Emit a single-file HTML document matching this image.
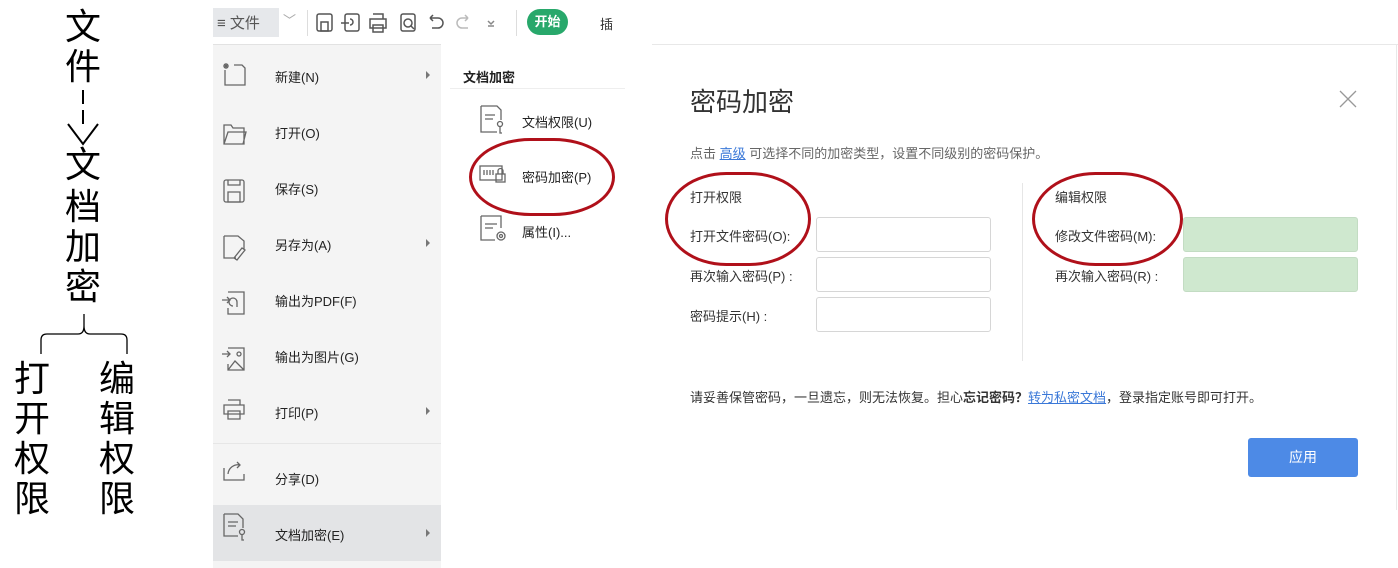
<!DOCTYPE html><html><head><meta charset="utf-8"><style>
body{margin:0;width:1398px;height:567px;background:#fff;position:relative;overflow:hidden;font-family:"Liberation Sans","Noto Sans CJK SC",sans-serif;color:#333}
.a{position:absolute;white-space:nowrap}
.big{font-size:36px;color:#000;line-height:38px;width:40px;text-align:center;font-family:"Liberation Sans","WenQuanYi Zen Hei",sans-serif}
.mi{position:absolute;left:275px;font-size:13px;color:#222}
.arr{position:absolute;left:426px;width:0;height:0;border-left:4px solid #777;border-top:4px solid transparent;border-bottom:4px solid transparent}
.lb{position:absolute;font-size:13px;color:#333}
.in{position:absolute;width:173px;height:33px;border:1px solid #d6d6d6;border-radius:3px;background:#fff}
.g{background:#cfe8cf;border-color:#c3dcc3}
.ell{position:absolute;border:3px solid #b0101a;border-radius:42%/50%}
</style></head><body>
<div class="a big" style="left:63px;top:8px">文</div>
<div class="a big" style="left:63px;top:48px">件</div>
<div class="a" style="left:82px;top:90px;width:2px;height:14px;background:#000"></div>
<div class="a" style="left:82px;top:110px;width:2px;height:14px;background:#000"></div>
<svg class="a" style="left:66px;top:122px" width="34" height="26"><path d="M2 2 L17 22 L32 2" stroke="#000" stroke-width="2" fill="none"/></svg>
<div class="a big" style="left:63px;top:146px">文</div>
<div class="a big" style="left:63px;top:188px">档</div>
<div class="a big" style="left:63px;top:228px">加</div>
<div class="a big" style="left:63px;top:268px">密</div>
<svg class="a" style="left:35px;top:310px" width="95" height="45"><path d="M6 44 V30 Q6 24 12 24 H43 Q49 24 49 16 V4 M49 16 Q49 24 55 24 H86 Q92 24 92 30 V44" stroke="#000" stroke-width="1.3" fill="none"/></svg>
<div class="a big" style="left:12px;top:360px">打</div>
<div class="a big" style="left:12px;top:400px">开</div>
<div class="a big" style="left:12px;top:440px">权</div>
<div class="a big" style="left:12px;top:480px">限</div>
<div class="a big" style="left:97px;top:360px">编</div>
<div class="a big" style="left:97px;top:400px">辑</div>
<div class="a big" style="left:97px;top:440px">权</div>
<div class="a big" style="left:97px;top:480px">限</div>

<div class="a" style="left:213px;top:8px;width:66px;height:29px;background:#e6e8eb"></div>
<div class="a" style="left:217px;top:12px;font-size:15px;color:#555">≡ 文件</div>
<div class="a" style="left:283px;top:10px;font-size:13px;color:#aaa">﹀</div>
<div class="a" style="left:307px;top:10px;width:1px;height:26px;background:#ddd"></div>
<svg class="a" style="left:315px;top:10px" width="200" height="26" fill="none" stroke="#555" stroke-width="1.5">
<rect x="2" y="4" width="15" height="17" rx="2"/><rect x="6" y="12" width="7" height="9"/>
<rect x="30" y="4" width="14" height="17" rx="2"/><path d="M26 13h8 M35 9a3 3 0 1 1 0 6"/>
<path d="M55 9h16v9H55z M58 4h10v5 M58 15h10v7H58z"/>
<rect x="86" y="4" width="14" height="17" rx="2"/><circle cx="93" cy="13" r="4"/><path d="M96 16l3 3"/>
<path d="M115 8h8a5 5 0 0 1 0 10h-6 M115 8l3-3 M115 8l3 3"/>
<path d="M153 8h-6a5 5 0 0 0 0 10h6 M153 8l-3-3 M153 8l-3 3" stroke="#bbb"/>
<path d="M173 11l3 3 3-3 M173 16h6" stroke="#888"/>
</svg>
<div class="a" style="left:516px;top:10px;width:1px;height:26px;background:#ddd"></div>
<div class="a" style="left:527px;top:9px;width:41px;height:26px;border-radius:13px;background:#28a86b;color:#fff;font-size:13px;font-weight:bold;text-align:center;line-height:26px">开始</div>
<div class="a" style="left:600px;top:14px;font-size:13px;color:#333">插</div>

<div class="a" style="left:213px;top:44px;width:228px;height:523px;background:#f4f4f4;border-top:1px solid #e2e2e2"></div>
<div class="a" style="left:213px;top:443px;width:228px;height:1px;background:#e6e6e6"></div>
<div class="a" style="left:213px;top:505px;width:228px;height:56px;background:#e3e4e6"></div>
<svg class="a" style="left:220px;top:62px" width="30" height="480" fill="none" stroke="#666" stroke-width="1.3">
<path d="M5 8v15h20V6l-3-3h-8 M4 2l4 4M8 2l-4 4M6 1v6M3 4h6"/>
<path d="M4 64v18h20V66H13l-2-3H4z M4 82l4-12h18l-3 12"/>
<rect x="4" y="118" width="20" height="22" rx="2"/><path d="M8 130h12v10H8z M8 118v5h12v-5"/>
<path d="M4 174v22h12 M4 174h14l6 5v8 M14 196l8-10 3 2-8 10z"/>
<path d="M8 230h16v22H8v-6 M2 238h8 M7 235l3 3-3 3 M13 244a4 4 0 1 1 4-4v5"/>
<path d="M8 286h16v22H8v-6 M2 292h8 M7 289l3 3-3 3 M8 308l7-9 9 9"/><circle cx="19" cy="292" r="2"/>
<path d="M4 343h20v9H4z M8 338h12v5 M8 349h12v8H8z"/>
<path d="M4 406v12h20v-6 M8 412a10 10 0 0 1 12-9 M17 400l3 3-3 3"/>
<path d="M4 452v22h14 M4 452h14l5 5v9 M8 460h10M8 464h8"/><circle cx="22" cy="470" r="2.5"/><path d="M22 473v5h2"/>
</svg>
<div class="mi" style="top:67px">新建(N)</div><div class="arr" style="top:71px"></div>
<div class="mi" style="top:123px">打开(O)</div>
<div class="mi" style="top:179px">保存(S)</div>
<div class="mi" style="top:235px">另存为(A)</div><div class="arr" style="top:239px"></div>
<div class="mi" style="top:291px">输出为PDF(F)</div>
<div class="mi" style="top:347px">输出为图片(G)</div>
<div class="mi" style="top:403px">打印(P)</div><div class="arr" style="top:407px"></div>
<div class="mi" style="top:469px">分享(D)</div>
<div class="mi" style="top:525px">文档加密(E)</div><div class="arr" style="top:529px"></div>

<div class="a" style="left:463px;top:67px;font-size:13px;font-weight:bold;color:#222">文档加密</div>
<div class="a" style="left:450px;top:88px;width:175px;height:1px;background:#eee"></div>
<svg class="a" style="left:478px;top:104px" width="32" height="140" fill="none" stroke="#666" stroke-width="1.3">
<path d="M3 2v26h16 M3 2h16l4 4v10 M7 11h10M7 15h8"/><circle cx="22" cy="20" r="2.5"/><path d="M22 23v6h2"/>
<rect x="2" y="62" width="22" height="14"/><path d="M6 66v5M9 66v5M12 66v5M15 66v5"/><rect x="18" y="70" width="9" height="8"/><path d="M20 70v-3a2.5 2.5 0 0 1 5 0v3"/>
<path d="M3 112v24h14 M3 112h20v12 M7 120h12M7 124h8"/><circle cx="23" cy="132" r="4"/><circle cx="23" cy="132" r="1.5"/>
</svg>
<div class="a" style="left:522px;top:112px;font-size:13px;color:#222">文档权限(U)</div>
<div class="a" style="left:522px;top:167px;font-size:13px;color:#222">密码加密(P)</div>
<div class="a" style="left:522px;top:222px;font-size:13px;color:#222">属性(I)...</div>
<div class="ell" style="left:469px;top:138px;width:140px;height:72px"></div>

<div class="a" style="left:652px;top:44px;width:746px;height:1px;background:#e8e8e8"></div>
<div class="a" style="left:1396px;top:44px;width:1px;height:466px;background:#e8e8e8"></div>
<div class="a" style="left:690px;top:82px;font-size:26px;color:#333">密码加密</div>
<svg class="a" style="left:1338px;top:89px" width="20" height="20"><path d="M2 2l16 16M18 2L2 18" stroke="#999" stroke-width="1.3"/></svg>
<div class="a" style="left:690px;top:143px;font-size:13px;color:#666">点击 <span style="color:#3a78d8;text-decoration:underline">高级</span> 可选择不同的加密类型，设置不同级别的密码保护。</div>
<div class="lb" style="left:690px;top:187px">打开权限</div>
<div class="lb" style="left:1055px;top:187px">编辑权限</div>
<div class="lb" style="left:690px;top:226px">打开文件密码(O):</div>
<div class="lb" style="left:690px;top:266px">再次输入密码(P) :</div>
<div class="lb" style="left:690px;top:306px">密码提示(H) :</div>
<div class="in" style="left:816px;top:217px"></div>
<div class="in" style="left:816px;top:257px"></div>
<div class="in" style="left:816px;top:297px"></div>
<div class="a" style="left:1022px;top:183px;width:1px;height:178px;background:#e6e6e6"></div>
<div class="lb" style="left:1055px;top:226px">修改文件密码(M):</div>
<div class="lb" style="left:1055px;top:266px">再次输入密码(R) :</div>
<div class="in g" style="left:1183px;top:217px"></div>
<div class="in g" style="left:1183px;top:257px"></div>
<div class="ell" style="left:665px;top:172px;width:140px;height:88px"></div>
<div class="ell" style="left:1032px;top:172px;width:145px;height:88px"></div>
<div class="a" style="left:690px;top:387px;font-size:13px;color:#333">请妥善保管密码，一旦遗忘，则无法恢复。担心<b>忘记密码？</b><span style="color:#3a78d8;text-decoration:underline">转为私密文档</span>，登录指定账号即可打开。</div>
<div class="a" style="left:1248px;top:438px;width:110px;height:39px;background:#4d8ae6;border-radius:3px;color:#fff;font-size:14px;text-align:center;line-height:39px">应用</div>
</body></html>
